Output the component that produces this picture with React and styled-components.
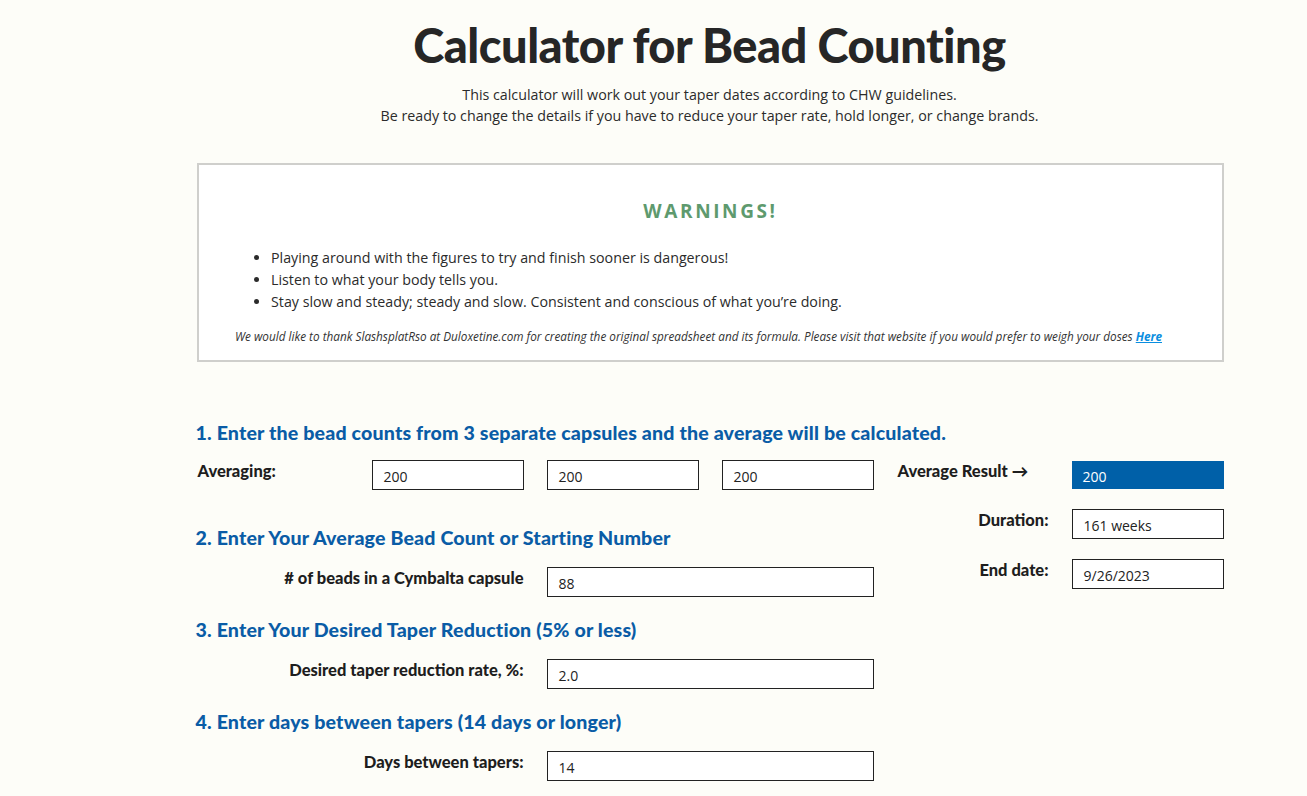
import React from "react";
import styled, { createGlobalStyle } from "styled-components";

const Global = createGlobalStyle`
  html, body { margin: 0; padding: 0; background: #fdfdf8; }
  body { font-family: "Open Sans", "Noto Sans", sans-serif; color: #2b2b2b; }
  * { box-sizing: border-box; }
`;

const Page = styled.div`
  width: 1307px;
  min-height: 796px;
  padding-top: 14px;
  padding-left: 112px;
  display: flex;
  flex-direction: column;
  align-items: center;
`;

const Title = styled.h1`
  margin: 0;
  font-family: Lato, sans-serif;
  font-weight: 900;
  font-size: 47px;
  line-height: 62px;
  color: #262626;
  letter-spacing: -0.5px;
`;

const Intro = styled.p`
  margin: 8px 0 0;
  text-align: center;
  font-size: 14.25px;
  line-height: 21px;
  color: #2b2b2b;
`;

const WarningBox = styled.section`
  margin-top: 37px;
  width: 1027px;
  margin-left: 2px;
  border: 2px solid #cfcfcc;
  background: #fff;
  padding: 34px 36px 16px;
  display: flex;
  flex-direction: column;
  align-items: center;
`;

const WarningTitle = styled.h2`
  margin: 0;
  font-size: 19px;
  line-height: 24px;
  font-weight: 700;
  letter-spacing: 2.6px;
  color: #5e9a6e;
`;

const List = styled.ul`
  align-self: stretch;
  margin: 24px 0 0;
  padding-left: 36px;
  font-size: 14.25px;
  line-height: 22px;
  color: #2b2b2b;
`;

const Credit = styled.p`
  margin: 15px 24px 0 0;
  font-size: 11.75px;
  font-style: italic;
  line-height: 16px;
  color: #333;
  a { color: #0a8ee0; font-weight: 700; }
`;

const Form = styled.div`
  width: 1028px;
  margin-top: 59px;
`;

const Heading = styled.h3`
  margin: 0;
  font-family: Lato, sans-serif;
  font-weight: 900;
  font-size: 19.6px;
  line-height: 24px;
  letter-spacing: 0.15px;
  color: #0a5ca6;
`;

const Columns = styled.div`
  display: grid;
  grid-template-columns: 678px 326px;
  column-gap: 24px;
  margin-top: 15px;
`;

const LeftCol = styled.div`
  display: flex;
  flex-direction: column;
`;

const RightCol = styled.div`
  display: flex;
  flex-direction: column;
  gap: 20px;
`;

const AvgRow = styled.div`
  display: grid;
  grid-template-columns: 153px 152px 152px 152px;
  column-gap: 23px;
`;

const Section = styled.div`
  margin-top: ${(p) => p.$top}px;
  display: flex;
  flex-direction: column;
  gap: 17px;
`;

const FieldRow = styled.div`
  display: grid;
  grid-template-columns: ${(p) => p.$label}px ${(p) => p.$input}px;
  column-gap: 23px;
  align-items: start;
`;

const Label = styled.label`
  font-family: Lato, sans-serif;
  font-weight: 900;
  font-size: 16.5px;
  line-height: 20px;
  padding-top: 1px;
  color: #1e1e1e;
  text-align: ${(p) => (p.$right ? "right" : "left")};
  padding-left: ${(p) => p.$indent || 0}px;
  white-space: nowrap;
`;

const Input = styled.div`
  height: 30px;
  border: 1px solid #222;
  background: #fff;
  padding: 2px 11px 0;
  display: flex;
  align-items: center;
  font-size: 14px;
  color: #222;
`;

const Result = styled(Input)`
  height: 28px;
  margin-top: 1px;
  border: none;
  background: #0060a8;
  color: #fff;
`;

export default function App() {
  return (
    <>
      <Global />
      <Page>
        <Title>Calculator for Bead Counting</Title>
        <Intro>
          This calculator will work out your taper dates according to CHW guidelines.
          <br />
          Be ready to change the details if you have to reduce your taper rate, hold longer, or change brands.
        </Intro>
        <WarningBox>
          <WarningTitle>WARNINGS!</WarningTitle>
          <List>
            <li>Playing around with the figures to try and finish sooner is dangerous!</li>
            <li>Listen to what your body tells you.</li>
            <li>Stay slow and steady; steady and slow. Consistent and conscious of what you’re doing.</li>
          </List>
          <Credit>
            We would like to thank SlashsplatRso at Duloxetine.com for creating the original spreadsheet and its
            formula. Please visit that website if you would prefer to weigh your doses <a href="#">Here</a>
          </Credit>
        </WarningBox>
        <Form>
          <Heading>1. Enter the bead counts from 3 separate capsules and the average will be calculated.</Heading>
          <Columns>
            <LeftCol>
              <AvgRow>
                <Label $indent={2}>Averaging:</Label>
                <Input>200</Input>
                <Input>200</Input>
                <Input>200</Input>
              </AvgRow>
              <Section $top={36}>
                <Heading>2. Enter Your Average Bead Count or Starting Number</Heading>
                <FieldRow $label={328} $input={327}>
                  <Label $right># of beads in a Cymbalta capsule</Label>
                  <Input>88</Input>
                </FieldRow>
              </Section>
              <Section $top={21}>
                <Heading>3. Enter Your Desired Taper Reduction (5% or less)</Heading>
                <FieldRow $label={328} $input={327}>
                  <Label $right>Desired taper reduction rate, %:</Label>
                  <Input>2.0</Input>
                </FieldRow>
              </Section>
              <Section $top={21}>
                <Heading>4. Enter days between tapers (14 days or longer)</Heading>
                <FieldRow $label={328} $input={327}>
                  <Label $right>Days between tapers:</Label>
                  <Input>14</Input>
                </FieldRow>
              </Section>
            </LeftCol>
            <RightCol>
              <FieldRow $label={151} $input={152}>
                <Label>Average Result →</Label>
                <Result>200</Result>
              </FieldRow>
              <FieldRow $label={151} $input={152}>
                <Label $right>Duration:</Label>
                <Input>161 weeks</Input>
              </FieldRow>
              <FieldRow $label={151} $input={152}>
                <Label $right>End date:</Label>
                <Input>9/26/2023</Input>
              </FieldRow>
            </RightCol>
          </Columns>
        </Form>
      </Page>
    </>
  );
}
